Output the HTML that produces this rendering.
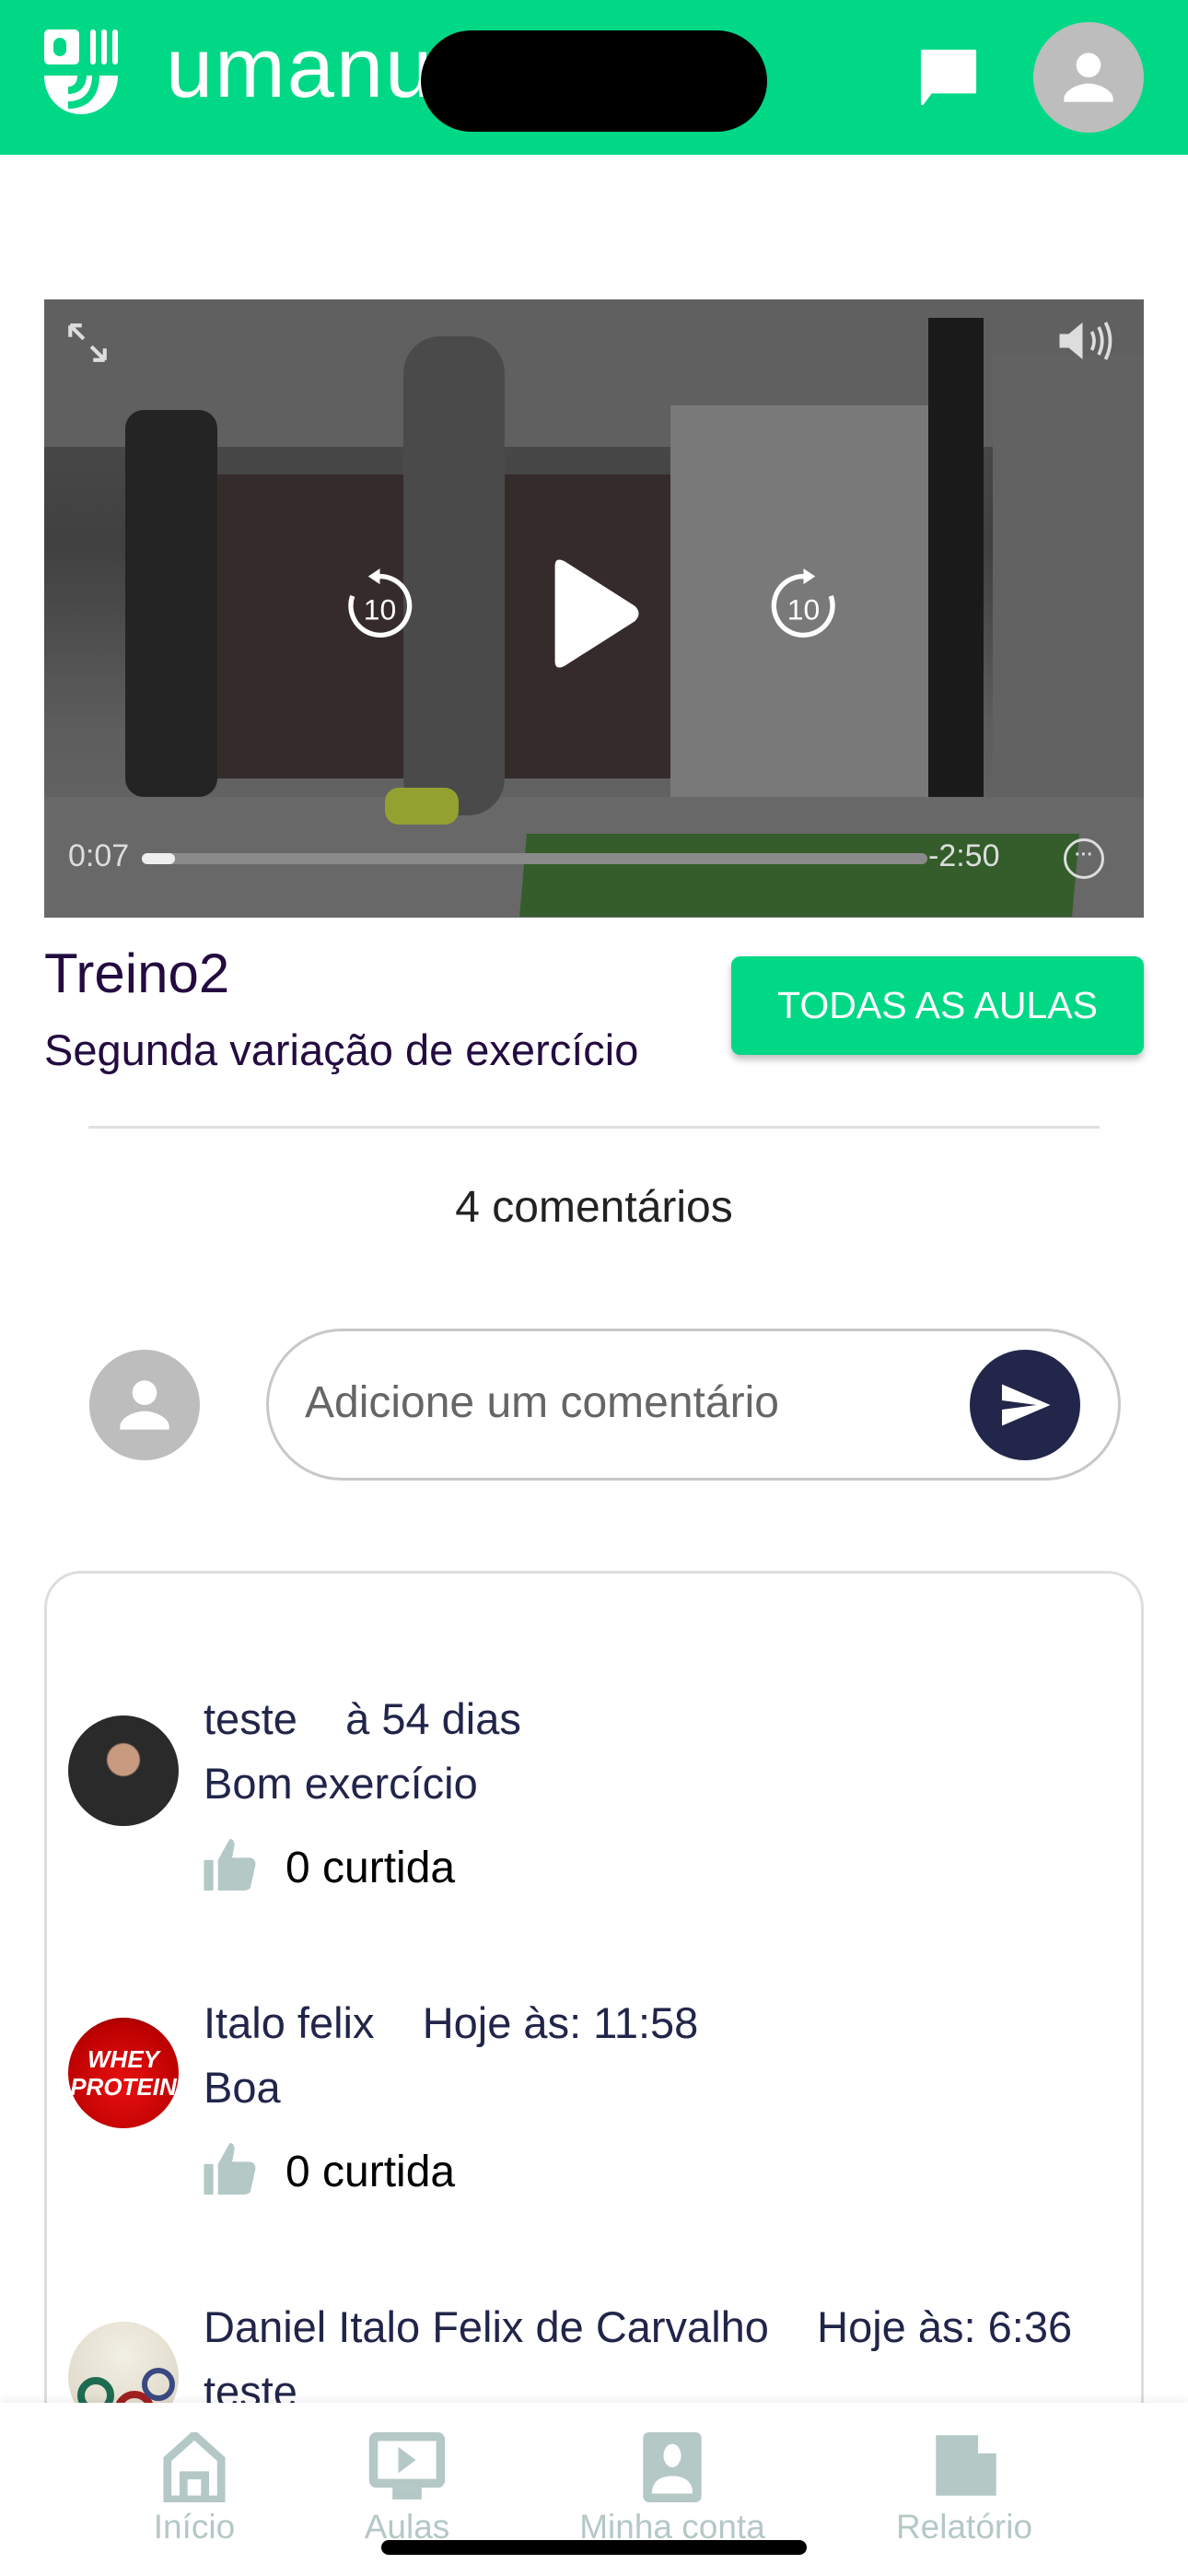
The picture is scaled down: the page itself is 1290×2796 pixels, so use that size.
<!DOCTYPE html>
<html style="overflow:hidden;height:2796px"><head><meta charset="utf-8">
<style>
*{margin:0;padding:0;box-sizing:border-box}
body{width:1290px;height:2796px;position:relative;background:#fff;font-family:"Liberation Sans",sans-serif;overflow:hidden}
.a{position:absolute}
.t{color:#22254a;font-size:47px;white-space:nowrap}
</style></head><body>
<!-- header -->
<div class="a" style="left:0;top:0;width:1290px;height:168px;background:#00d886"></div>
<svg class="a" style="left:48px;top:30px" width="92" height="95" viewBox="0 0 92 95">
<rect x="0" y="2" width="38" height="38" rx="5" fill="#fff"/>
<rect x="10" y="11" width="14" height="20" rx="7" fill="#00d886"/>
<rect x="50" y="2" width="6" height="38" rx="3" fill="#fff"/>
<rect x="62" y="2" width="6" height="38" rx="3" fill="#fff"/>
<rect x="74" y="2" width="6" height="38" rx="3" fill="#fff"/>
<path d="M0 52 H36 C36 60 32 64 26 64 L26 72 C40 72 46 62 46 52 H52 C52 68 44 80 26 80 L26 88 C50 88 60 72 60 52 H80 C80 76 62 94 40 94 C18 94 0 76 0 52 Z" fill="#fff"/>
</svg>
<div class="a" style="left:180px;top:22px;font-size:92px;color:#fff;font-weight:300;letter-spacing:2px">umanu</div>
<div class="a" style="left:457px;top:33px;width:376px;height:110px;border-radius:55px;background:#000"></div>
<svg class="a" style="left:992px;top:46px" width="76" height="76" viewBox="0 0 24 24"><path d="M3 3h18v14H6l-3 4z" fill="#fff" stroke="#fff" stroke-linejoin="round" stroke-width="1"/></svg>
<div class="a" style="left:1122px;top:24px;width:120px;height:120px;border-radius:50%;background:#bdbdbd"></div>
<svg class="a" style="left:1142px;top:44px" width="80" height="80" viewBox="0 0 24 24"><circle cx="12" cy="8" r="4" fill="#fff"/><path d="M4 20v-1c0-3 5-5 8-5s8 2 8 5v1z" fill="#fff"/></svg>

<!-- video -->
<div class="a" style="left:48px;top:325px;width:1194px;height:671px;background:linear-gradient(180deg,#5c5c5c 0%,#4a4a4a 40%,#6b6b6b 70%,#7a7a7a 100%);overflow:hidden">
 <div class="a" style="left:0;top:0;width:1194px;height:160px;background:#6e6e6e"></div>
 <div class="a" style="left:180px;top:190px;width:500px;height:330px;background:#3e3232"></div>
 <div class="a" style="left:88px;top:120px;width:100px;height:420px;background:#2a2a2a;border-radius:20px"></div>
 <div class="a" style="left:680px;top:115px;width:340px;height:450px;background:#8a8a8a"></div>
 <div class="a" style="left:960px;top:20px;width:60px;height:520px;background:#1e1e1e"></div>
 <div class="a" style="left:1030px;top:60px;width:164px;height:520px;background:#707070"></div>
 <div class="a" style="left:0;top:540px;width:1194px;height:131px;background:#777"></div>
 <div class="a" style="left:520px;top:580px;width:600px;height:90px;background:#3c6a32;transform:skewX(-5deg)"></div>
 <div class="a" style="left:390px;top:40px;width:110px;height:520px;background:#555;border-radius:40px"></div>
 <div class="a" style="left:370px;top:530px;width:80px;height:40px;background:#a8b838;border-radius:15px"></div>
 <div class="a" style="left:0;top:0;width:1194px;height:671px;background:rgba(0,0,0,0.12)"></div>
</div>
<svg class="a" style="left:70px;top:347px" width="50" height="50" viewBox="0 0 24 24" fill="none" stroke="#ddd" stroke-width="2"><path d="M3 3l7 7M3 3v6M3 3h6M21 21l-7-7M21 21v-6M21 21h-6"/></svg>
<svg class="a" style="left:1148px;top:345px" width="70" height="50" viewBox="0 0 28 20" fill="#ddd"><path d="M1 7h4l6-5v16l-6-5H1z"/><path d="M15 6q2 4 0 8M18 4q3 6 0 12M21 2q4 8 0 16" stroke="#ddd" stroke-width="1.5" fill="none"/></svg>
<svg class="a" style="left:370px;top:615px" width="85" height="85" viewBox="0 0 40 40"><path d="M20 5 A15 15 0 1 1 6 15" fill="none" stroke="#fff" stroke-width="2.5"/><path d="M20 1 L14 5 L20 9z" fill="#fff"/><text x="20" y="27" text-anchor="middle" font-size="15" fill="#fff" font-family="Liberation Sans">10</text></svg>
<svg class="a" style="left:830px;top:615px" width="85" height="85" viewBox="0 0 40 40"><path d="M20 5 A15 15 0 1 0 34 15" fill="none" stroke="#fff" stroke-width="2.5"/><path d="M20 1 L26 5 L20 9z" fill="#fff"/><text x="20" y="27" text-anchor="middle" font-size="15" fill="#fff" font-family="Liberation Sans">10</text></svg>
<svg class="a" style="left:594px;top:604px" width="104" height="124" viewBox="0 0 100 120"><path d="M8 10 Q8 0 18 5 L92 52 Q100 60 92 68 L18 115 Q8 120 8 110Z" fill="#fff"/></svg>
<div class="a" style="left:74px;top:910px;font-size:34px;color:#ddd">0:07</div>
<div class="a" style="left:154px;top:926px;width:853px;height:12px;border-radius:6px;background:#8a8a8a"></div>
<div class="a" style="left:154px;top:926px;width:36px;height:12px;border-radius:6px;background:#eee"></div>
<div class="a" style="left:1008px;top:910px;font-size:34px;color:#ddd">-2:50</div>
<div class="a" style="left:1155px;top:910px;width:44px;height:44px;border-radius:50%;border:3px solid #ddd;text-align:center;font-size:20px;line-height:30px;color:#ddd;font-weight:bold">···</div>

<!-- title -->
<div class="a" style="left:48px;top:1022px;font-size:60px;color:#230b40">Treino2</div>
<div class="a" style="left:48px;top:1112px;font-size:47px;color:#230b40">Segunda variação de exercício</div>
<div class="a" style="left:794px;top:1038px;width:448px;height:107px;border-radius:10px;background:#00d886;box-shadow:0 5px 8px rgba(0,0,0,0.25);color:#fff;font-size:41px;text-align:center;line-height:107px">TODAS AS AULAS</div>
<div class="a" style="left:96px;top:1222px;width:1098px;height:3px;background:#e0e0e0"></div>
<div class="a" style="left:0;top:1283px;width:1290px;text-align:center;font-size:48px;color:#222">4 comentários</div>

<!-- input -->
<div class="a" style="left:97px;top:1465px;width:120px;height:120px;border-radius:50%;background:#bdbdbd"></div>
<svg class="a" style="left:117px;top:1485px" width="80" height="80" viewBox="0 0 24 24"><circle cx="12" cy="8" r="4" fill="#fff"/><path d="M4 20v-1c0-3 5-5 8-5s8 2 8 5v1z" fill="#fff"/></svg>
<div class="a" style="left:289px;top:1442px;width:928px;height:165px;border-radius:83px;border:3px solid #c8c8c8"></div>
<div class="a" style="left:331px;top:1495px;font-size:48px;color:#666">Adicione um comentário</div>
<div class="a" style="left:1053px;top:1465px;width:120px;height:120px;border-radius:50%;background:#22264a"></div>
<svg class="a" style="left:1080px;top:1495px" width="66" height="60" viewBox="0 0 24 24"><path d="M2 21l21-9L2 3v7l15 2-15 2z" fill="#fff"/></svg>

<!-- comments card -->
<div class="a" style="left:48px;top:1705px;width:1194px;height:1000px;border-radius:40px;border:3px solid #ddd"></div>

<div class="a" style="left:74px;top:1862px;width:120px;height:120px;border-radius:50%;background:radial-gradient(circle at 50% 40%,#c89a80 0 18%,#2a2a2a 20% 100%)"></div>
<div class="a t" style="left:221px;top:1838px">teste&nbsp;&nbsp;&nbsp;&nbsp;à 54 dias</div>
<div class="a t" style="left:221px;top:1908px">Bom exercício</div>
<svg class="a" style="left:221px;top:1996px" width="62" height="56" viewBox="0 0 24 22"><path d="M0 9h4v13H0zM6 22V9l5-9c2 0 2 2 2 3l-1 5h7c2 0 3 1 3 3l-2 9c0 1-1 2-3 2z" fill="#b4c8c6"/></svg>
<div class="a" style="left:310px;top:2000px;font-size:48px;color:#000">0 curtida</div>

<div class="a" style="left:74px;top:2190px;width:120px;height:120px;border-radius:50%;background:radial-gradient(circle at 50% 60%,#e81010,#b00 70%,#500 100%);color:#fff;font-weight:bold;font-style:italic;font-size:26px;line-height:30px;text-align:center;padding-top:30px">WHEY<br>PROTEIN</div>
<div class="a t" style="left:221px;top:2168px">Italo felix&nbsp;&nbsp;&nbsp;&nbsp;Hoje às: 11:58</div>
<div class="a t" style="left:221px;top:2238px">Boa</div>
<svg class="a" style="left:221px;top:2326px" width="62" height="56" viewBox="0 0 24 22"><path d="M0 9h4v13H0zM6 22V9l5-9c2 0 2 2 2 3l-1 5h7c2 0 3 1 3 3l-2 9c0 1-1 2-3 2z" fill="#b4c8c6"/></svg>
<div class="a" style="left:310px;top:2330px;font-size:48px;color:#000">0 curtida</div>

<div class="a" style="left:74px;top:2520px;width:120px;height:120px;border-radius:50%;background:radial-gradient(circle at 50% 30%,#f2efe4,#d8d2c0);overflow:hidden"><div class="a" style="left:10px;top:60px;width:40px;height:40px;border-radius:50%;border:8px solid #1d6b50"></div><div class="a" style="left:50px;top:75px;width:44px;height:44px;border-radius:50%;border:8px solid #a02020"></div><div class="a" style="left:80px;top:50px;width:36px;height:36px;border-radius:50%;border:6px solid #3a4a80"></div></div>
<div class="a t" style="left:221px;top:2498px">Daniel Italo Felix de Carvalho&nbsp;&nbsp;&nbsp;&nbsp;Hoje às: 6:36</div>
<div class="a t" style="left:221px;top:2568px">teste</div>

<!-- bottom nav -->
<div class="a" style="left:0;top:2608px;width:1290px;height:188px;background:#fff;box-shadow:0 -4px 8px rgba(0,0,0,0.06)"></div>
<svg class="a" style="left:176px;top:2640px" width="70" height="76" viewBox="0 0 24 26"><path d="M2 25V10L12 1l10 9v15zM8 25v-9h8v9" fill="none" stroke="#b4c8c6" stroke-width="3"/></svg>
<svg class="a" style="left:400px;top:2640px" width="84" height="76" viewBox="0 0 26 24"><rect x="1.5" y="1.5" width="23" height="16" rx="1" fill="none" stroke="#b4c8c6" stroke-width="3"/><path d="M10 5l6 4.5-6 4.5z M8 19h10v4H8z" fill="#b4c8c6"/></svg>
<svg class="a" style="left:697px;top:2640px" width="66" height="76" viewBox="0 0 20 24"><rect x="0" y="0" width="20" height="24" rx="2" fill="#b4c8c6"/><ellipse cx="10" cy="8" rx="3" ry="4" fill="#fff"/><path d="M3 21c0-5 4-6 7-6s7 1 7 6z" fill="#fff"/></svg>
<svg class="a" style="left:1012px;top:2640px" width="74" height="72" viewBox="0 0 22 22"><path d="M1 1h14l6 6v14H1z" fill="#b4c8c6"/><path d="M15 1v6h6" fill="#fff"/></svg>
<div class="a" style="left:131px;top:2722px;width:160px;text-align:center;font-size:37px;color:#b4c8c6">Início</div>
<div class="a" style="left:362px;top:2722px;width:160px;text-align:center;font-size:37px;color:#b4c8c6">Aulas</div>
<div class="a" style="left:600px;top:2722px;width:260px;text-align:center;font-size:37px;color:#b4c8c6">Minha conta</div>
<div class="a" style="left:947px;top:2722px;width:200px;text-align:center;font-size:37px;color:#b4c8c6">Relatório</div>
<div class="a" style="left:414px;top:2757px;width:462px;height:16px;border-radius:8px;background:#000"></div>
</body></html>
